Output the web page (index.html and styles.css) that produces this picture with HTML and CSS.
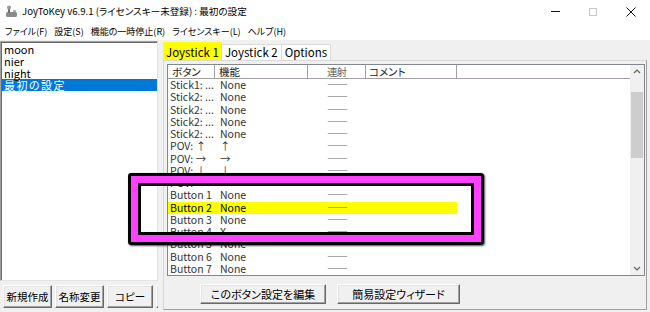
FILE: index.html
```html
<!doctype html>
<html>
  <head>
    <meta charset="utf-8" />
    <title>JoyToKey</title>
    <link rel="stylesheet" href="styles.css">
  </head>
  <body>
    <div class="window">
      <div class="titlebar">
        <svg class="app-icon" width="13" height="13" viewBox="0 0 13 13">
          <rect x="1" y="7" width="11" height="5" rx="1.5" fill="#8a8a8a"/>
          <rect x="3" y="2" width="2" height="6" fill="#6e6e6e"/>
          <circle cx="4" cy="2.5" r="2" fill="#9a9a9a"/>
          <rect x="8" y="5" width="3" height="2" fill="#b0b0b0"/>
        </svg>
        <span class="title">JoyToKey v6.9.1 (ライセンスキー未登録) : 最初の設定</span>
        <div class="controls">
          <span class="ctl"><span class="ctl-min"></span></span>
          <span class="ctl"><span class="ctl-max"></span></span>
          <span class="ctl">
            <svg width="10" height="10" viewBox="0 0 10 10"><path d="M0.5 0.5 L9.5 9.5 M9.5 0.5 L0.5 9.5" stroke="#111" stroke-width="1"/></svg>
          </span>
        </div>
      </div>
      <div class="menubar">
        <span class="menu">ファイル(F)</span>
        <span class="menu">設定(S)</span>
        <span class="menu">機能の一時停止(R)</span>
        <span class="menu">ライセンスキー(L)</span>
        <span class="menu">ヘルプ(H)</span>
      </div>
      <div class="main">
        <div class="left">
          <ul class="configs">
            <li>moon</li>
            <li>nier</li>
            <li>night</li>
            <li class="selected">最初の設定</li>
          </ul>
          <div class="left-buttons">
            <button class="btn b1">新規作成</button>
            <button class="btn b2">名称変更</button>
            <button class="btn b3">コピー</button>
            <button class="btn b4"></button>
          </div>
        </div>
        <div class="splitter"></div>
        <div class="right">
          <div class="tabs">
            <span class="tab active">Joystick 1</span>
            <span class="tab">Joystick 2</span>
            <span class="tab">Options</span>
          </div>
          <div class="panel">
            <div class="listview">
              <div class="grid">
                <div class="row header">
                  <span class="c1">ボタン</span><span class="c2">機能</span><span class="c3">連射</span><span class="c4">コメント</span><span class="c5"></span>
                </div>
                <div class="row"><span class="c1">Stick1: ...</span><span class="c2">None</span><span class="c3">――</span><span class="c4"></span></div>
                <div class="row"><span class="c1">Stick2: ...</span><span class="c2">None</span><span class="c3">――</span><span class="c4"></span></div>
                <div class="row"><span class="c1">Stick2: ...</span><span class="c2">None</span><span class="c3">――</span><span class="c4"></span></div>
                <div class="row"><span class="c1">Stick2: ...</span><span class="c2">None</span><span class="c3">――</span><span class="c4"></span></div>
                <div class="row"><span class="c1">Stick2: ...</span><span class="c2">None</span><span class="c3">――</span><span class="c4"></span></div>
                <div class="row"><span class="c1">POV: ↑</span><span class="c2">↑</span><span class="c3">――</span><span class="c4"></span></div>
                <div class="row"><span class="c1">POV: →</span><span class="c2">→</span><span class="c3">――</span><span class="c4"></span></div>
                <div class="row"><span class="c1">POV: ↓</span><span class="c2">↓</span><span class="c3">――</span><span class="c4"></span></div>
                <div class="row"><span class="c1">POV: ←</span><span class="c2">←</span><span class="c3">――</span><span class="c4"></span></div>
                <div class="row"><span class="c1">Button 1</span><span class="c2">None</span><span class="c3">――</span><span class="c4"></span></div>
                <div class="row marked"><span class="c1">Button 2</span><span class="c2">None</span><span class="c3">――</span><span class="c4"></span></div>
                <div class="row"><span class="c1">Button 3</span><span class="c2">None</span><span class="c3">――</span><span class="c4"></span></div>
                <div class="row"><span class="c1">Button 4</span><span class="c2">X</span><span class="c3">――</span><span class="c4"></span></div>
                <div class="row"><span class="c1">Button 5</span><span class="c2">None</span><span class="c3">――</span><span class="c4"></span></div>
                <div class="row"><span class="c1">Button 6</span><span class="c2">None</span><span class="c3">――</span><span class="c4"></span></div>
                <div class="row"><span class="c1">Button 7</span><span class="c2">None</span><span class="c3">――</span><span class="c4"></span></div>
              </div>
              <div class="scrollbar">
                <svg class="arrow" width="14" height="13" viewBox="0 0 14 13"><path d="M4 8 L7 5 L10 8" fill="none" stroke="#606060" stroke-width="1.2"/></svg>
                <div class="track"><div class="thumb"></div></div>
                <svg class="arrow" width="14" height="13" viewBox="0 0 14 13"><path d="M4 5 L7 8 L10 5" fill="none" stroke="#606060" stroke-width="1.2"/></svg>
              </div>
            </div>
            <div class="panel-buttons">
              <button class="btn wide">このボタン設定を編集</button>
              <button class="btn wizard">簡易設定ウィザード</button>
            </div>
          </div>
        </div>
      </div>
      <div class="callout"><div class="callout-mid"><div class="callout-in"></div></div></div>
    </div>
  </body>
</html>
```

FILE: styles.css
```css
* { margin: 0; padding: 0; box-sizing: border-box; }
body {
  width: 650px;
  height: 312px;
  overflow: hidden;
  background: #f0f0f0;
  color: #000;
  font-family: "Noto Sans CJK JP", "Noto Sans", sans-serif;
  font-feature-settings: "palt";
  font-size: 11px;
}
.window { position: relative; width: 650px; height: 312px; }

/* title + menu */
.titlebar { height: 23px; background: #fff; display: flex; align-items: center; }
.app-icon { margin-left: 5px; }
.title { margin-left: 4px; font-size: 9.6px; line-height: 1; }
.controls { margin-left: auto; display: flex; height: 23px; }
.ctl { width: 38px; display: flex; align-items: center; justify-content: center; }
.ctl-min { width: 9px; border-top: 1px solid #111; }
.ctl-max { width: 8px; height: 8px; border: 1px solid #c8c8c8; }
.menubar { height: 17px; background: #fff; display: flex; align-items: center; padding-left: 5px; font-size: 9px; }
.menu { margin-right: 7px; line-height: 1; }

.main { display: flex; height: 272px; }

/* config list */
.left { width: 158px; display: flex; flex-direction: column; }
.configs {
  list-style: none;
  margin-top: 1px;
  height: 240px;
  background: #fff;
  border: 1px solid #a0a0a0;
  border-right-color: #e3e3e3;
  border-bottom-color: #e3e3e3;
  box-shadow: inset 1px 1px 0 #696969;
  padding: 1px 0 0 1px;
  font-size: 11px;
}
.configs li { height: 12px; line-height: 12px; padding-left: 2px; }
.configs li.selected { background: #0078d7; color: #fff; letter-spacing: 1.5px; }

.btn {
  font-family: inherit;
  font-feature-settings: "palt";
  font-size: 10.5px;
  color: #000;
  background: #f0f0f0;
  border: 1px solid;
  border-color: #fff #696969 #696969 #fff;
  box-shadow: inset -1px -1px 0 #a0a0a0, inset 1px 1px 0 #e3e3e3;
  white-space: nowrap;
}
.left-buttons { display: flex; gap: 3px; padding: 4px 0 0 3px; overflow: hidden; }
.left-buttons .btn { height: 23px; flex: none; }
.b1 { width: 49px; }
.b2 { width: 49px; }
.b3 { width: 46px; }
.b4 { width: 40px; }

.splitter { width: 5px; }

/* tab page */
.right { width: 484px; display: flex; flex-direction: column; }
.tabs { display: flex; align-items: flex-end; height: 19px; margin-top: 1px; }
.tab {
  height: 16px;
  line-height: 15px;
  padding: 0 3px;
  font-size: 11.5px;
  background: #fff;
  border: 1px solid #d9d9d9;
  border-bottom: none;
  margin-left: -1px;
}
.tab.active { height: 18px; line-height: 18px; background: #ffff00; border-color: #ffff00; margin-left: 0; padding: 0 2px; }
.panel {
  height: 250px;
  border: 1px solid #a0a0a0;
  border-top-color: #d9d9d9;
  border-left-color: #d9d9d9;
}
.listview {
  margin: 3px 1px 0 3px;
  height: 212px;
  border: 1px solid #828790;
  background: #fff;
  display: flex;
}
.grid { flex: 1; overflow: hidden; }
.row { display: flex; height: 12.25px; line-height: 12.25px; font-size: 10.5px; color: #333; white-space: nowrap; }
.c1 { width: 47px; padding-left: 2px; flex: none; }
.c2 { width: 93px; padding-left: 5px; flex: none; }
.c3 { width: 58px; text-align: center; color: #666; letter-spacing: -1px; flex: none; }
.c4 { width: 91px; flex: none; }
.c5 { flex: 1; }
.row.marked .c1, .row.marked .c2, .row.marked .c3, .row.marked .c4 { background: #ffff00; }
.row.marked { color: #000; }
.header { height: 14px; line-height: 13px; font-size: 10.5px; color: #222; }
.header span { border-right: 1px solid #a0a0a0; border-bottom: 1px solid #a0a0a0; }
.header .c1 { padding-left: 4px; }
.header .c2 { padding-left: 4px; }
.header .c4 { padding-left: 3px; }
.header .c5 { border-right: none; }

.scrollbar { width: 14px; background: #f0f0f0; display: flex; flex-direction: column; align-items: center; }
.arrow { flex: none; }
.track { flex: 1; width: 12px; padding-top: 14px; }
.thumb { height: 66px; background: #cdcdcd; }

.panel-buttons { display: flex; gap: 11px; padding: 8px 0 0 36px; }
.panel-buttons .btn { height: 20px; font-size: 11px; }
.wide { width: 126px; }
.wizard { width: 123px; }

/* highlight frame drawn over the screenshot */
.callout {
  position: absolute;
  left: 128px;
  top: 173px;
  width: 356px;
  height: 72px;
  border: 3px solid #000;
  border-radius: 3px;
  box-shadow: 1px 1px 2px rgba(0, 0, 0, 0.7);
}
.callout-mid { height: 100%; border: 7px solid #ff40ff; }
.callout-in { height: 100%; border: 3px solid #000; }
```
